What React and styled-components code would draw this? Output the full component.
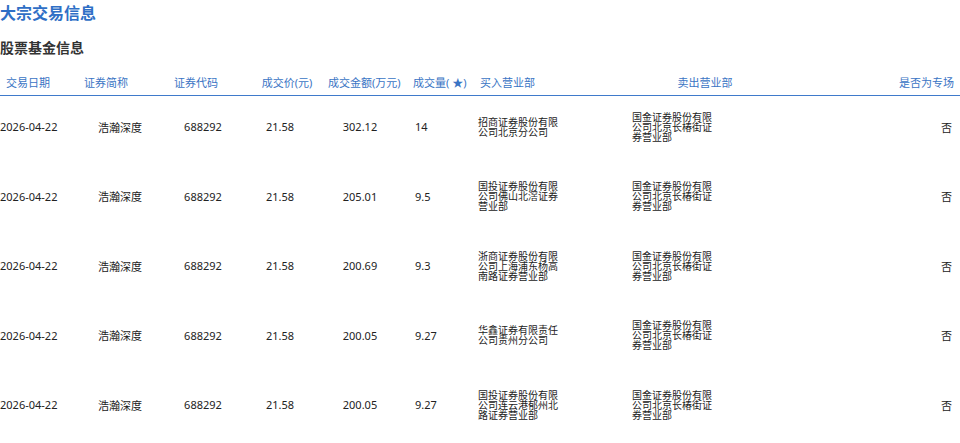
import React from 'react';
import styled, { createGlobalStyle } from 'styled-components';

const Global = createGlobalStyle`
  body { margin: 0; background: #fff; font-family: "Noto Sans", "Noto Sans CJK SC", sans-serif; color: #222; }
`;

const Title = styled.h1`
  margin: 0; padding-top: 3px; height: 22px;
  font-size: 16px; font-weight: 700; color: #2f6fc6; line-height: 20px;
`;

const Sub = styled.h2`
  margin: 13px 0 0; font-size: 14px; font-weight: 700; color: #333; line-height: 20px;
`;

const COLS = '60px 90px 90px 80px 80px 75px 155px 150px 1fr';

const Head = styled.div`
  display: grid; grid-template-columns: ${COLS};
  margin-top: 10px; height: 27px; align-items: center;
  border-bottom: 1px solid #3f7acb;
`;

const HCell = styled.div`
  font-size: 11px; color: #3a74c4; white-space: nowrap;
  text-align: ${p => p.$align || 'center'};
  padding-left: ${p => p.$pl || 0}px; padding-right: ${p => p.$pr || 0}px;
`;

const Body = styled.div`
  margin-top: -4px;
`;

const Row = styled.div`
  display: grid; grid-template-columns: ${COLS};
  height: 69.5px; align-items: center;
`;

const Cell = styled.div`
  font-size: 11px; color: #222; white-space: nowrap;
  text-align: ${p => p.$align || 'center'};
  padding-left: ${p => p.$pl || 0}px; padding-right: ${p => p.$pr || 0}px;
`;

const Org = styled.div`
  width: 82px; font-size: 10px; line-height: 10px; color: #222;
  margin-left: ${p => p.$pl || 0}px; word-break: break-all;
`;

const rows = [
  ['302.12', '14', '招商证券股份有限公司北京分公司'],
  ['205.01', '9.5', '国投证券股份有限公司佛山北滘证券营业部'],
  ['200.69', '9.3', '浙商证券股份有限公司上海浦东杨高南路证券营业部'],
  ['200.05', '9.27', '华鑫证券有限责任公司贵州分公司'],
  ['200.05', '9.27', '国投证券股份有限公司连云港郁州北路证券营业部'],
];

export default function App() {
  return (
    <>
      <Global />
      <Title>大宗交易信息</Title>
      <Sub>股票基金信息</Sub>
      <Head>
        <HCell $pr={4}>交易日期</HCell>
        <HCell $pl={2}>证券简称</HCell>
        <HCell $pl={2}>证券代码</HCell>
        <HCell $pl={14}>成交价(元)</HCell>
        <HCell $pl={8}>成交金额(万元)</HCell>
        <HCell $align="left" $pl={13}>成交量( ★)</HCell>
        <HCell $align="left" $pl={5}>买入营业部</HCell>
        <HCell>卖出营业部</HCell>
        <HCell $align="right" $pr={6}>是否为专场</HCell>
      </Head>
      <Body>
        {rows.map((r, i) => (
          <Row key={i}>
            <Cell $align="left">2026-04-22</Cell>
            <Cell $pl={30}>浩瀚深度</Cell>
            <Cell $pl={16}>688292</Cell>
            <Cell>21.58</Cell>
            <Cell $pl={-12}>{r[0]}</Cell>
            <Cell $align="left" $pl={15}>{r[1]}</Cell>
            <Org $pl={3}>{r[2]}</Org>
            <Org $pl={2}>国金证券股份有限公司北京长椿街证券营业部</Org>
            <Cell $align="right" $pr={8}>否</Cell>
          </Row>
        ))}
      </Body>
    </>
  );
}
